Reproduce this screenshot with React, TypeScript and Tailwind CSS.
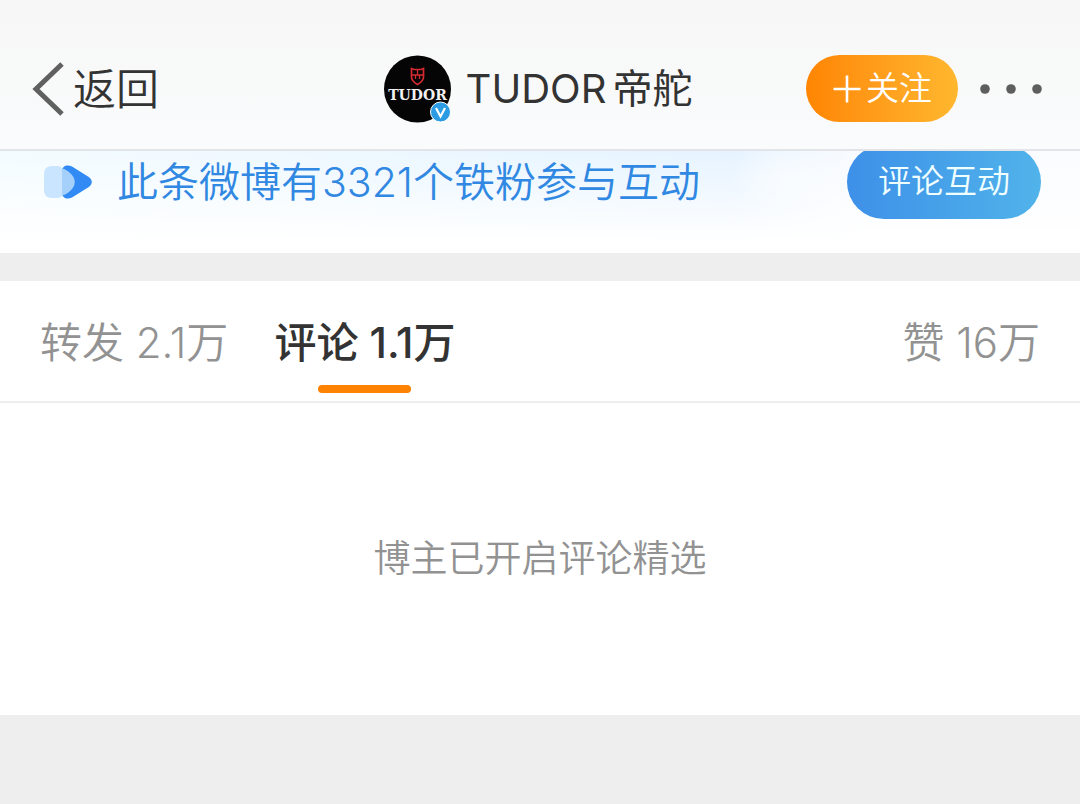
const tabs = [
  { id: "reposts", label: "转发", count: "2.1万", active: false },
  { id: "comments", label: "评论", count: "1.1万", active: true },
  { id: "likes", label: "赞", count: "16万", active: false },
];

function Avatar() {
  return (
    <svg viewBox="0 0 68 68" className="w-[68px] h-[68px] flex-shrink-0" role="img" aria-label="TUDOR">
      <circle cx="33.5" cy="34" r="33.5" fill="#050505" />
      {/* shield */}
      <g fill="none" stroke="#d42a30" strokeWidth="1.7">
        <path d="M27.500 13.500l2.500 1h7l2.500-1v8.500c0 3.500-2.500 5.500-6 7.500-3.500-2-6-4-6-7.500z" />
        <path d="M28 20h11M31.500 20v4M35.500 20v4M33.500 14.500v5.500" strokeWidth="1.300" />
      </g>
      <text
        x="33.5"
        y="45"
        textAnchor="middle"
        fontSize="14"
        fontWeight="700"
        fill="#f4f1f1"
        className="font-['DejaVu_Serif','Liberation_Serif',serif]"
      >
        TUDOR
      </text>
      {/* verified badge */}
      <circle cx="56.500" cy="57" r="10" fill="#2b9be3" stroke="#fff" strokeWidth="1" />
      <path d="M52 53l4.500 8.500L61 53" fill="none" stroke="#fff" strokeWidth="2.200" />
    </svg>
  );
}

function Header() {
  return (
    <header className="relative z-10 grid grid-cols-[1fr_auto_1fr] items-center pt-7 h-[151px] pl-8 pr-9 border-b-2 border-[#e2e4e7] bg-linear-to-b from-[#f7f7f7] to-[#fafbfc]">
      <a href="#back" className="flex items-center gap-[9px] text-[43px] leading-[60px] font-[350] text-[#333]">
        <svg viewBox="0 0 32 54" className="w-8 h-[54px]" fill="none" stroke="#606060" strokeWidth="5" aria-hidden="true">
          <path d="M30 2L4 27l26 25" />
        </svg>
        返回
      </a>

      <div className="flex items-center gap-3.5">
        <Avatar />
        <h1 className="flex gap-1.5 text-[40px] leading-[60px] text-[#333] whitespace-nowrap">
          <span>TUDOR</span>
          <span>帝舵</span>
        </h1>
      </div>

      <div className="flex items-center justify-end gap-5">
        <button className="flex items-center justify-center gap-1 w-[152px] h-[67px] rounded-full bg-linear-to-r from-[#ff8500] to-[#ffb72e] text-[33px] font-[350] text-white">
          <svg viewBox="0 0 30 30" className="w-[30px] h-[30px]" stroke="currentColor" strokeWidth="2.600" aria-hidden="true">
            <path d="M1.500 15h27M15 1.500v27" />
          </svg>
          关注
        </button>
        <button aria-label="更多" className="text-[#5e5e5e]">
          <svg viewBox="0 0 66 12" className="w-[66px] h-3" fill="currentColor">
            <circle cx="7" cy="6" r="4.800" />
            <circle cx="33" cy="6" r="4.800" />
            <circle cx="59" cy="6" r="4.800" />
          </svg>
        </button>
      </div>
    </header>
  );
}

function FansBanner() {
  return (
    <section className="overflow-hidden pb-10 pl-11 pr-[39px] bg-[radial-gradient(ellipse_60px_34px_at_73%_26px,rgba(255,255,255,0.5),transparent),linear-gradient(to_bottom,transparent,#fff_90%),linear-gradient(to_right,#f4fcff,#e8f5ff_55%,#e6f3ff_68%,#fafcff_80%)]">
      <div className="flex items-center h-[62px]">
        <svg viewBox="0 0 48 34" className="w-12 h-[34px] mr-[25px]" aria-hidden="true">
          <path d="M18 6C18 1 23-1 28 1.500L44 11.500c5 3.200 5 7.800 0 11L28 32.500c-5 2.500-10 .5-10-4.500z" fill="#328bf4" />
          <path d="M8 1h5c3 0 4 1 5 2v28c-1 1-2 2-5 2H8c-5 0-8-3-8-8V9c0-5 3-8 8-8z" fill="#c9e5ff" />
          <path d="M18 3.500c3 .5 5 2 7.500 4 7 5.500 7 13.500 0 19-2.500 2-4.500 3.500-7.500 4z" fill="#a5d0fc" />
        </svg>
        <p className="flex-1 text-[41px] font-[350] leading-[60px] text-[#3088e2] whitespace-nowrap">
          此条微博有3321个铁粉参与互动
        </p>
        <button className="w-[194px] h-[74px] flex-shrink-0 rounded-full bg-linear-to-r from-[#3e90e8] to-[#51b3ea] text-[33px] font-[350] text-[#f0ffff]">
          评论互动
        </button>
      </div>
    </section>
  );
}

function Tabs() {
  return (
    <nav className="flex h-[122px] px-10 gap-[46px] bg-white border-b-2 border-[#eee]">
      {tabs.map(({ id, label, count, active }) => (
        <button
          key={id}
          aria-pressed={active}
          className={`flex flex-col items-center pt-8 text-[42px] leading-[60px] whitespace-nowrap last:ml-auto ${
            active ? "font-medium text-[#333]" : "font-[350] text-[#929292]"
          }`}
        >
          {label} {count}
          {active && <span className="mt-3 w-[93px] h-2 rounded-full bg-[#ff8200]" />}
        </button>
      ))}
    </nav>
  );
}

export default function App() {
  return (
    <div className="min-h-screen bg-[#eee] font-['Inter','Noto_Sans_CJK_SC',sans-serif]">
      <Header />
      <FansBanner />
      <main className="mt-7">
        <Tabs />
        <p className="py-[126px] bg-white text-center text-[37px] font-[350] leading-[60px] text-[#929292]">
          博主已开启评论精选
        </p>
      </main>
    </div>
  );
}
